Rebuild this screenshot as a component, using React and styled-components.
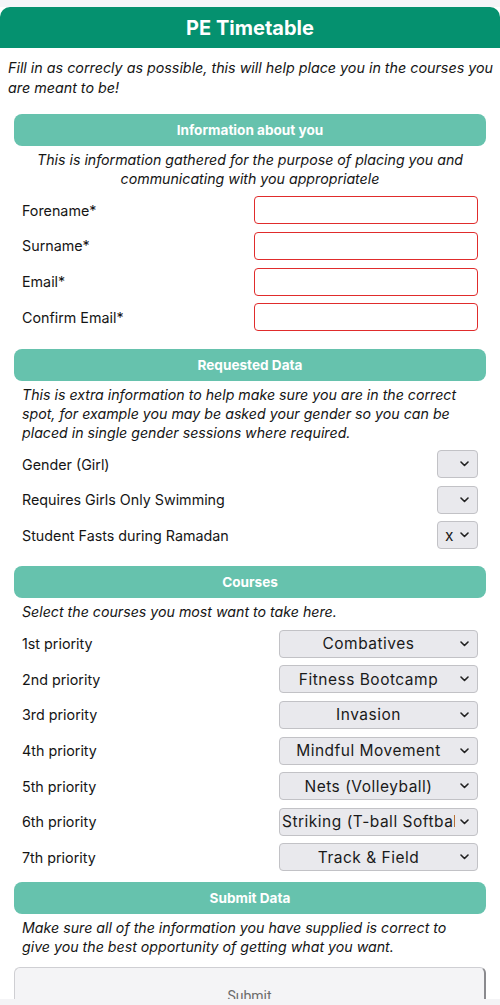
import React from "react";
import styled, { createGlobalStyle } from "styled-components";

const Global = createGlobalStyle`
  html, body { margin: 0; padding: 0; background: #ffffff; }
  body { font-family: Inter, "Open Sans", sans-serif; color: #151515; }
  * { box-sizing: border-box; }
`;

const Page = styled.div`
  background: #ffffff;
  padding-top: 7px;
  min-height: 1005px;
  position: relative;
  &::before {
    content: "";
    position: absolute;
    left: 0; right: 0; top: 0; height: 7px;
    background: #f5f5f8;
  }
`;

const TopBar = styled.header`
  height: 41px;
  background: #05916f;
  border-radius: 10px 10px 0 0;
  display: flex;
  align-items: center;
  justify-content: center;
  color: #fff;
  font-family: Inter, "Open Sans", sans-serif;
  font-weight: 700;
  font-size: 20px;
  position: relative;
`;

const Intro = styled.p`
  margin: 10px 6px 0 8px;
  font-style: italic;
  font-size: 14.3px;
  line-height: 20px;
`;

const Section = styled.section`
  margin: ${(p) => p.$top}px 14px 0 14px;
`;

const SectionHead = styled.div`
  height: 32px;
  background: #66c2ad;
  border-radius: 8px;
  color: #fff;
  font-family: Inter, "Open Sans", sans-serif;
  font-weight: 700;
  font-size: 13.6px;
  display: flex;
  align-items: center;
  justify-content: center;
`;

const Desc = styled.p`
  margin: 5px 8px 4px 8px;
  font-style: italic;
  font-size: 14.2px;
  line-height: 18.8px;
  text-align: ${(p) => (p.$center ? "center" : "left")};
`;

const Row = styled.div`
  height: 35.6px;
  padding: 0 8px;
  display: flex;
  align-items: center;
  justify-content: space-between;
`;

const Label = styled.label`
  font-size: 14.3px;
`;

const TextInput = styled.input`
  width: 224px;
  height: 28px;
  border: 1.5px solid #e02c2c;
  border-radius: 4px;
  background: #fff;
  outline: none;
`;

const SelectWrap = styled.div`
  position: relative;
  width: ${(p) => p.$w}px;
  height: 28px;
`;

const Select = styled.select`
  appearance: none;
  -webkit-appearance: none;
  width: 100%;
  height: 100%;
  border: 1px solid #c2c2c6;
  border-radius: 4px;
  background: #e9e9ed;
  color: #1a1a1a;
  font-family: Inter, "Open Sans", sans-serif;
  font-size: 15.5px;
  letter-spacing: 0.5px;
  text-align: ${(p) => (p.$small ? "left" : "center")};
  text-align-last: ${(p) => (p.$small ? "left" : "center")};
  padding: ${(p) => (p.$small ? "0 20px 0 7px" : "0 22px 0 2px")};
  white-space: nowrap;
  overflow: hidden;
`;

const Chevron = styled.svg`
  position: absolute;
  right: 9px;
  top: 11px;
  width: 9px;
  height: 6px;
  pointer-events: none;
`;

const SubmitButton = styled.button`
  display: block;
  width: calc(100% - 28px);
  margin: 10px 14px 0 14px;
  height: 58px;
  border: 1px solid #cfcfd3;
  border-right: 2px solid #8a8a8e;
  border-radius: 6px;
  background: #f4f4f6;
  color: #6b6b6b;
  font-family: Roboto, "Open Sans", sans-serif;
  font-size: 14px;
  padding: 0;
`;

const BottomStrip = styled.div`
  position: fixed;
  left: 0;
  right: 0;
  bottom: 0;
  height: 6px;
  background: #f4f4f6;
`;

const ChevronIcon = () => (
  <Chevron viewBox="0 0 9 6">
    <path d="M1 1 L4.5 4.5 L8 1" fill="none" stroke="#222" strokeWidth="1.6" strokeLinecap="round" strokeLinejoin="round" />
  </Chevron>
);

const Dropdown = ({ w, small, value }) => (
  <SelectWrap $w={w}>
    <Select $small={small} defaultValue={value}>
      <option value={value}>{value}</option>
    </Select>
    <ChevronIcon />
  </SelectWrap>
);

const infoFields = ["Forename*", "Surname*", "Email*", "Confirm Email*"];
const requested = [
  ["Gender (Girl)", ""],
  ["Requires Girls Only Swimming", ""],
  ["Student Fasts during Ramadan", "x"],
];
const courses = [
  ["1st priority", "Combatives"],
  ["2nd priority", "Fitness Bootcamp"],
  ["3rd priority", "Invasion"],
  ["4th priority", "Mindful Movement"],
  ["5th priority", "Nets (Volleyball)"],
  ["6th priority", "Striking (T-ball Softball)"],
  ["7th priority", "Track & Field"],
];

export default function App() {
  return (
    <Page>
      <Global />
      <TopBar>PE Timetable</TopBar>
      <Intro>
        Fill in as correcly as possible, this will help place you in the courses you are meant to be!
      </Intro>

      <Section $top={16}>
        <SectionHead>Information about you</SectionHead>
        <Desc $center>
          This is information gathered for the purpose of placing you and communicating with you appropriatele
        </Desc>
        {infoFields.map((f) => (
          <Row key={f}>
            <Label>{f}</Label>
            <TextInput type="text" />
          </Row>
        ))}
      </Section>

      <Section $top={14}>
        <SectionHead>Requested Data</SectionHead>
        <Desc>
          This is extra information to help make sure you are in the correct spot, for example you may be asked your gender so you can be placed in single gender sessions where required.
        </Desc>
        {requested.map(([l, v]) => (
          <Row key={l}>
            <Label>{l}</Label>
            <Dropdown w={41} small value={v} />
          </Row>
        ))}
      </Section>

      <Section $top={13}>
        <SectionHead>Courses</SectionHead>
        <Desc>Select the courses you most want to take here.</Desc>
        {courses.map(([l, v]) => (
          <Row key={l}>
            <Label>{l}</Label>
            <Dropdown w={199} value={v} />
          </Row>
        ))}
      </Section>

      <Section $top={7}>
        <SectionHead>Submit Data</SectionHead>
        <Desc>
          Make sure all of the information you have supplied is correct to give you the best opportunity of getting what you want.
        </Desc>
      </Section>
      <SubmitButton type="button">Submit</SubmitButton>
      <BottomStrip />
    </Page>
  );
}
